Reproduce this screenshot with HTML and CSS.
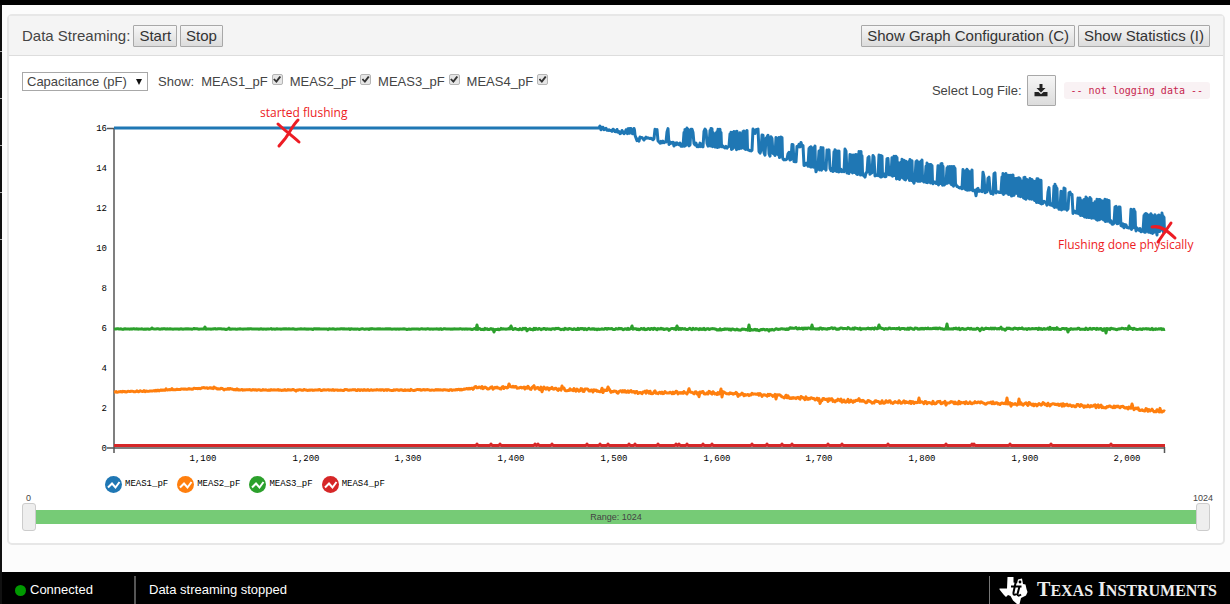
FILE: index.html
```html
<!DOCTYPE html>
<html lang="en">
<head>
<meta charset="utf-8">
<title>Data Streaming</title>
<link rel="stylesheet" href="styles.css">
</head>
<body>
<div class="app">
  <main class="content">
    <section class="panel">
      <header class="panel-head">
        <div class="group">
          <span>Data Streaming:</span>
          <button class="btn" type="button">Start</button>
          <button class="btn" type="button">Stop</button>
        </div>
        <div class="group">
          <button class="btn" type="button">Show Graph Configuration (C)</button>
          <button class="btn" type="button">Show Statistics (I)</button>
        </div>
      </header>
      <div class="panel-body">
        <div class="controls">
          <div class="filters">
            <span class="select-wrap"><select class="unit" aria-label="Unit"><option>Capacitance (pF)</option></select></span>
            <span class="show">Show:</span>
            <label class="check">MEAS1_pF<input type="checkbox" checked></label>
            <label class="check">MEAS2_pF<input type="checkbox" checked></label>
            <label class="check">MEAS3_pF<input type="checkbox" checked></label>
            <label class="check">MEAS4_pF<input type="checkbox" checked></label>
          </div>
          <div class="log">
            <label for="log-file">Select Log File:</label>
            <button class="btn log-btn" id="log-file" type="button" aria-label="Select log file">
              <svg class="download" viewBox="0 0 14 13"><path d="M5.500 0h3v4h3L7 8.500 2.500 4h3z"/><path d="M0.500 8h4L7 10.300 9.500 8h4v4.200h-13z"/></svg>
            </button>
            <code class="log-state">-- not logging data --</code>
          </div>
        </div>
        <svg class="chart" viewBox="22 106 1188 362" role="img" aria-label="Capacitance over sample number">
          <path class="axis-line" d="M107 128.500H114M114 128V453M107 448H1165M1164.500 447V453"/>
          <g id="y-labels" class="tick y"></g>
          <g id="x-labels" class="tick x"></g>
          <path id="meas4" class="line red"/>
          <path id="meas2" class="line orange"/>
          <path id="meas3" class="line green"/>
          <path id="meas1" class="line blue"/>
          <g class="mark">
            <path d="M278 124C283 129 290 134 299 142M298 120C292 126 289 134 284 140L279 146"/>
            <path d="M1152 227C1160 225 1167 230 1175 238M1171 223L1158 242"/>
            <text x="260" y="117">started flushing</text>
            <text x="1058" y="249">Flushing done physically</text>
          </g>
        </svg>
        <ul class="legend">
          <li><svg class="dot blue" viewBox="0 0 17 17"><circle cx="8.500" cy="8.500" r="8.500"/><path d="M3 11.500L7 7.500 10.500 11.500 14.500 6"/></svg>MEAS1_pF</li>
          <li><svg class="dot orange" viewBox="0 0 17 17"><circle cx="8.500" cy="8.500" r="8.500"/><path d="M3 11.500L7 7.500 10.500 11.500 14.500 6"/></svg>MEAS2_pF</li>
          <li><svg class="dot green" viewBox="0 0 17 17"><circle cx="8.500" cy="8.500" r="8.500"/><path d="M3 11.500L7 7.500 10.500 11.500 14.500 6"/></svg>MEAS3_pF</li>
          <li><svg class="dot red" viewBox="0 0 17 17"><circle cx="8.500" cy="8.500" r="8.500"/><path d="M3 11.500L7 7.500 10.500 11.500 14.500 6"/></svg>MEAS4_pF</li>
        </ul>
        <div class="range">
          <div class="range-ends"><span>0</span><span>1024</span></div>
          <div class="slider">
            <div class="track">Range: 1024</div>
            <input type="range" min="0" max="1024" value="0" aria-label="Range start">
            <input type="range" min="0" max="1024" value="1024" aria-label="Range end">
          </div>
        </div>
      </div>
    </section>
  </main>
  <footer class="status">
    <div class="connection"><span class="led"></span>Connected</div>
    <div class="message">Data streaming stopped</div>
    <div class="brand">
      <svg class="ti" viewBox="0 0 30 28"><path class="state" d="M8.500 1H14.500V6.500L18 7.500 19 3.500 23 2.500 24 8 26.500 8.500 27.500 13 28.500 16 27 19.500 22 22 20.500 28H18L14 24.500 11.500 20 9 19 7 21 4.500 18.500 0.500 13.500V12.500H8z"/><path class="mono" d="M12 10.500H22.500M16.500 7L14.500 16.500Q14 20 17.500 18M20.500 10.500L18.500 18Q18.500 21 22 18.500"/><circle class="mono-dot" cx="21" cy="6" r="1.400"/></svg>
      <span class="wordmark">T<small>EXAS</small> I<small>NSTRUMENTS</small></span>
    </div>
  </footer>
</div>
<script src="chart.js"></script>
</body>
</html>
```
FILE: styles.css
```css
* { box-sizing: border-box; }
body { margin: 0; background: #fcfcfc; color: #444; font: 13px/16px "Liberation Sans", Arial, sans-serif; }
.app {
  min-height: 100vh; display: flex; flex-direction: column; padding-left: 2px;
  border-top: 5px solid #000;
  background: repeating-linear-gradient(#111 0 46px, #aaa 46px 47px) 0 0 / 2px 235px no-repeat,
    linear-gradient(#111, #111) 0 0 / 2px 100% no-repeat;
}
.content { flex: 1; padding: 9px 5px 26px; }
.panel { border: 2px solid #e7e7e7; border-radius: 5px; background: #fff; }
.panel-head {
  display: flex; justify-content: space-between; align-items: center;
  height: 40px; padding: 0 13px; background: #f4f4f4; border-bottom: 1px solid #ddd;
  font-size: 15px;
}
.group { display: flex; align-items: center; gap: 3px; }
.btn {
  height: 22px; padding: 0 5px; border: 1px solid #a8a8a8; border-radius: 1px;
  background: linear-gradient(#f6f6f6, #dcdcdc); color: #333;
  font: 15px/18px "Liberation Sans", Arial, sans-serif;
}
.panel-body { padding: 16px 13px 12px; }
.controls { display: flex; justify-content: space-between; height: 34px; }
.filters { display: flex; align-items: flex-start; line-height: 19px; }
.select-wrap { position: relative; }
.select-wrap::after {
  content: ""; position: absolute; right: 6px; top: 7px; pointer-events: none;
  border: 3px solid transparent; border-top: 6px solid #111; border-bottom: 0;
}
.unit {
  appearance: none; width: 126px; height: 19px; padding: 0 4px; background: #fff; color: #444;
  border: 1px solid #a8a8a8; border-radius: 0; font: 13px/17px "Liberation Sans", Arial, sans-serif;
}
.show { margin: 0 7px 0 10px; }
.check { display: flex; align-items: flex-start; gap: 4px; margin-right: 7px; }
.check input {
  appearance: none; width: 11px; height: 11px; margin: 2px 0 0; display: grid; place-items: center;
  border: 1px solid #b5b5b5; border-radius: 2px; background: #e6e6e6;
}
.check input:checked::before {
  content: ""; width: 8px; height: 7px; background: #333;
  clip-path: polygon(0 50%, 20% 35%, 38% 60%, 80% 0, 100% 15%, 42% 100%);
}
.log { display: flex; align-items: center; gap: 5px; padding-top: 3px; }
.log-btn { width: 29px; height: 31px; display: grid; place-items: center; padding: 0; }
.download { width: 14px; height: 13px; fill: #222; }
.log-state {
  margin-left: 3px; padding: 0 7px; border-radius: 3px; background: #f9f2f4; color: #c7254e;
  font: 10px/17px "DejaVu Sans Mono", monospace;
}
.chart { display: block; width: 100%; height: auto; overflow: visible; }
.axis-line { fill: none; stroke: #555; stroke-width: 1.5px; }
.tick { font: 9px "Liberation Mono", "Courier New", monospace; fill: #000; }
.tick.y { text-anchor: end; }
.tick.x { text-anchor: middle; }
.line { fill: none; stroke: currentColor; stroke-width: 3px; stroke-linejoin: round; }
.blue { color: #1f77b4; }
.orange { color: #ff7f0e; }
.green { color: #2ca02c; }
.red { color: #d62728; }
.mark path { fill: none; stroke: #ed1c24; stroke-width: 3px; stroke-linecap: round; }
.mark text { fill: #ed1c24; font: 12px "Open Sans", sans-serif; }
.legend {
  display: flex; gap: 9px; margin: 8px 0 0; padding: 0 0 0 83px; list-style: none;
  font: 9px/17px "Liberation Mono", "Courier New", monospace; color: #000;
}
.legend li { display: flex; align-items: center; gap: 3px; }
.dot { width: 17px; height: 17px; }
.dot circle { fill: currentColor; }
.dot path { fill: none; stroke: #fff; stroke-width: 2px; }
.range { font-size: 9px; line-height: 10px; }
.range-ends { display: flex; justify-content: space-between; padding: 0 0 0 4px; }
.range-ends span:last-child { margin-right: -3px; }
.slider { position: relative; height: 28px; padding: 7px 0; }
.track { height: 14px; line-height: 14px; background: #76cb76; text-align: center; }
.slider input {
  appearance: none; position: absolute; top: 0; left: 0; width: 100%; height: 28px;
  margin: 0; background: none; pointer-events: none;
}
.slider input::-webkit-slider-thumb {
  appearance: none; width: 14px; height: 28px; border: 1px solid #ccc; border-radius: 3px;
  background: #eee; pointer-events: auto;
}
.status { display: flex; height: 32px; padding-top: 4px; background: #000; color: #fff; }
.connection {
  display: flex; align-items: center; gap: 4px; width: 134px; padding: 0 0 0 13px;
  border-right: 2px solid #555;
}
.led { width: 11px; height: 11px; border-radius: 50%; background: #090; }
.message { flex: 1; display: flex; align-items: center; padding-left: 13px; }
.brand { display: flex; align-items: center; gap: 8px; padding: 0 13px 0 9px; border-left: 1px solid #777; }
.ti { width: 30px; height: 28px; fill: #fff; }
.mono { fill: none; stroke: #000; stroke-width: 2px; }
.mono-dot { fill: #000; }
.wordmark { font: bold 20px/28px "Liberation Serif", "Times New Roman", serif; color: #eee; white-space: nowrap; }
.wordmark small { font-size: 16px; }
```
FILE: chart.js
```js
(function () {
  var seed = 7;
  function rnd() { seed = (seed * 16807) % 2147483647; return seed / 2147483647; }
  function interp(pts, x) {
    for (var i = 1; i < pts.length; i++) {
      if (x <= pts[i][0]) {
        var a = pts[i - 1], b = pts[i];
        return a[1] + (b[1] - a[1]) * (x - a[0]) / (b[0] - a[0]);
      }
    }
    return pts[pts.length - 1][1];
  }
  function draw(id, pts) {
    document.getElementById(id).setAttribute("d", "M" + pts.map(function (p) {
      return p[0].toFixed(1) + " " + p[1].toFixed(1);
    }).join("L"));
  }
  function label(group, x, y, text) {
    var t = document.createElementNS("http://www.w3.org/2000/svg", "text");
    t.setAttribute("x", x);
    t.setAttribute("y", y);
    t.textContent = text;
    document.getElementById(group).appendChild(t);
  }
  for (var v = 0; v <= 16; v += 2) label("y-labels", 107, 451 - v * 20, v);
  for (var k = 0; k < 10; k++) label("x-labels", 203 + Math.round(k * 102.7), 461, (1100 + k * 100).toLocaleString("en-US"));

  // MEAS1: falling floor with bursts [start, end, top] back towards the old level
  var floor = [[114, 128], [600, 128], [612, 130], [620, 132], [634, 132], [637, 141], [641, 138], [652, 139], [662, 142], [673, 144],
    [690, 145], [712, 145], [725, 147], [750, 149], [759, 151], [770, 155], [778, 155], [783, 158], [795, 161], [805, 164],
    [816, 168], [830, 170], [850, 172], [865, 174], [880, 175], [900, 178], [920, 180], [935, 183], [950, 184], [960, 187],
    [976, 190], [990, 192], [1002, 193], [1022, 196], [1041, 202], [1060, 208], [1070, 211], [1090, 217], [1108, 221],
    [1120, 225], [1140, 230], [1155, 232], [1165, 231]];
  var bursts = [[626, 634, 128], [655, 657, 128], [667, 668, 129], [684, 688, 129], [691, 693, 129], [704, 706, 129], [710, 713, 129],
    [716, 721, 129], [730, 737, 130], [740, 747, 131], [753, 758, 130], [762, 763, 135], [766, 768, 136], [771, 772, 137],
    [776, 782, 138], [788, 789, 150], [792, 793, 143], [797, 803, 143], [809, 815, 145], [819, 823, 148], [827, 829, 150],
    [834, 839, 149], [845, 846, 149], [850, 862, 152], [868, 869, 156], [873, 874, 156], [879, 882, 153], [887, 888, 157],
    [892, 897, 157], [899, 906, 160], [909, 912, 158], [916, 922, 161], [926, 932, 163], [938, 943, 164], [947, 955, 167],
    [963, 972, 170], [983, 984, 173], [988, 989, 176], [994, 995, 171], [1002, 1013, 174], [1015, 1025, 178], [1027, 1041, 179],
    [1048, 1049, 188], [1054, 1057, 185], [1061, 1065, 189], [1069, 1072, 192], [1078, 1091, 197], [1093, 1109, 200],
    [1115, 1116, 206], [1119, 1120, 207], [1131, 1135, 210], [1144, 1155, 213], [1158, 1164, 214]];
  var open = [753, 797, 1069];
  var dips = { 816: 5, 783: 2, 865: 4, 883: 2, 914: 3, 942: 3, 976: 4, 1040: 2, 1103: 2, 1145: 3, 1157: 3 };
  var blue = [];
  for (var x = 114; x <= 1165; x++) {
    var low = interp(floor, x) + (x < 600 ? 0 : (rnd() - 0.5) * 4) + (dips[x] || 0);
    var burst = bursts.find(function (b) { return x >= b[0] && x <= b[1]; });
    if (!burst) {
      blue.push([x, low]);
    } else {
      blue.push([x, burst[2] + rnd() * 5 - 1]);
      if (open.indexOf(burst[0]) < 0 && burst[1] - burst[0] > 2) blue.push([x + 0.5, low]);
    }
  }
  draw("meas1", blue);

  function noisy(id, base, calm, busy, spikes) {
    var out = [];
    for (var x = 114; x <= 1165; x++) {
      var amp = x < 472 ? calm : busy;
      var y = interp(base, x) + (rnd() - 0.5) * amp;
      if (rnd() > 0.94) y += (rnd() - 0.5) * amp * 2;
      out.push([x, y]);
    }
    spikes.forEach(function (s) { out[s[0] - 114][1] = s[1]; });
    draw(id, out);
  }
  noisy("meas3", [[114, 329], [700, 329], [760, 330], [800, 328.5], [1165, 329]], 0.5, 1.5,
    [[152, 328], [205, 327], [229, 328], [477, 325], [494, 332], [511, 326], [632, 326], [677, 326], [749, 325], [812, 325], [879, 325],
      [947, 324], [1068, 332], [1106, 333], [1129, 326]]);
  noisy("meas2", [[114, 392], [150, 391], [205, 388], [250, 390], [350, 390], [455, 390], [475, 388], [510, 387.5], [560, 389], [620, 392],
    [720, 393], [780, 396], [825, 400], [880, 402], [980, 403], [1060, 405], [1120, 407], [1145, 410], [1165, 411]], 1, 3,
    [[509, 384], [562, 386], [608, 387], [721, 389], [722, 397], [776, 399], [919, 398], [1007, 398], [1019, 399], [1132, 404]]);
  var red = [];
  for (var q = 114; q <= 1165; q++) red.push([q, 445.5 - (q > 472 && rnd() > 0.95 ? 1.5 : 0)]);
  draw("meas4", red);
})();
```
